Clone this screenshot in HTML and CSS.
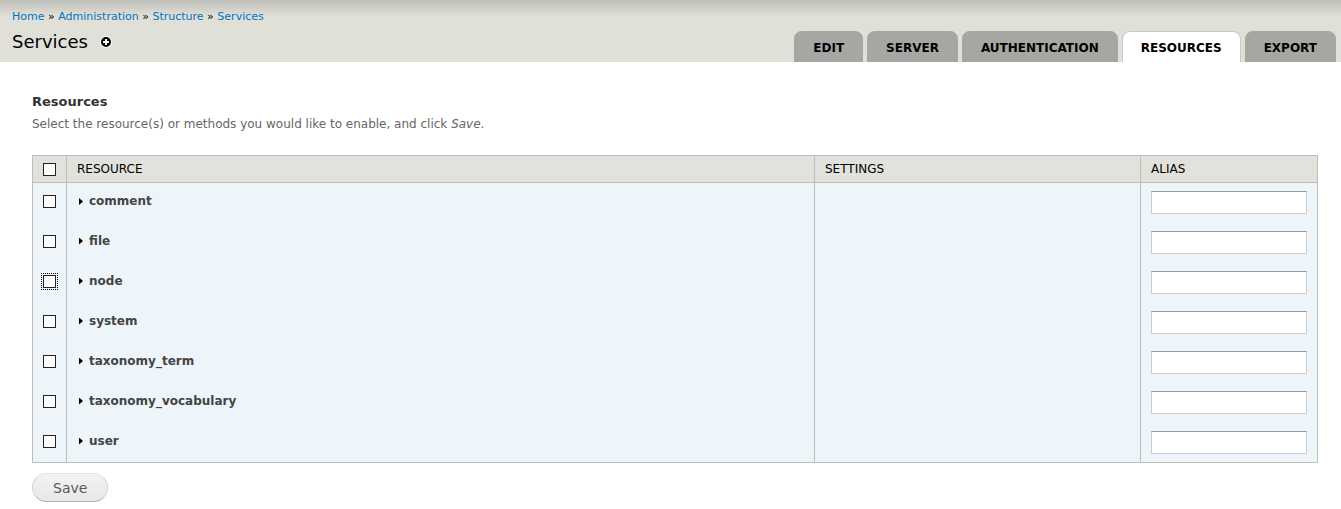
FILE: index.html
```html
<!DOCTYPE html>
<html lang="en">
<head>
<meta charset="utf-8">
<title>Services</title>
<link rel="stylesheet" href="styles.css">
</head>
<body>
<header class="branding">
  <nav class="breadcrumb" aria-label="Breadcrumb"><a href="#">Home</a> » <a href="#">Administration</a> » <a href="#">Structure</a> » <a href="#">Services</a></nav>
  <div class="title-bar">
    <h1 class="page-title">Services</h1>
    <a class="shortcut" href="#" aria-label="Add to shortcuts">
      <svg width="12" height="12" viewBox="0 0 12 12"><circle cx="6" cy="6" r="6" fill="#fff"/><circle cx="6" cy="6" r="5" fill="#000"/><path d="M5 3h2v2h2v2H7v2H5V7H3V5h2z" fill="#fff"/></svg>
    </a>
  </div>
  <nav class="tabs" aria-label="Primary tabs">
    <a class="tab" href="#">EDIT</a>
    <a class="tab" href="#">SERVER</a>
    <a class="tab" href="#">AUTHENTICATION</a>
    <a class="tab tab-active" href="#" aria-current="page">RESOURCES</a>
    <a class="tab" href="#">EXPORT</a>
  </nav>
</header>
<main class="content">
  <form>
    <h2 class="section-title">Resources</h2>
    <p class="description">Select the resource(s) or methods you would like to enable, and click <em>Save</em>.</p>
    <table class="resources">
      <colgroup><col class="col-check"><col><col class="col-settings"><col class="col-alias"></colgroup>
      <thead>
        <tr><th class="check-cell"><input class="check" type="checkbox" aria-label="Select all"></th><th>RESOURCE</th><th>SETTINGS</th><th>ALIAS</th></tr>
      </thead>
      <tbody>
        <tr><td class="check-cell"><input class="check" type="checkbox" id="r1"></td><td><label class="name" for="r1">comment</label></td><td></td><td><input class="alias" type="text" aria-label="comment alias"></td></tr>
        <tr><td class="check-cell"><input class="check" type="checkbox" id="r2"></td><td><label class="name" for="r2">file</label></td><td></td><td><input class="alias" type="text" aria-label="file alias"></td></tr>
        <tr><td class="check-cell"><input class="check check-focused" type="checkbox" id="r3"></td><td><label class="name" for="r3">node</label></td><td></td><td><input class="alias" type="text" aria-label="node alias"></td></tr>
        <tr><td class="check-cell"><input class="check" type="checkbox" id="r4"></td><td><label class="name" for="r4">system</label></td><td></td><td><input class="alias" type="text" aria-label="system alias"></td></tr>
        <tr><td class="check-cell"><input class="check" type="checkbox" id="r5"></td><td><label class="name" for="r5">taxonomy_term</label></td><td></td><td><input class="alias" type="text" aria-label="taxonomy_term alias"></td></tr>
        <tr><td class="check-cell"><input class="check" type="checkbox" id="r6"></td><td><label class="name" for="r6">taxonomy_vocabulary</label></td><td></td><td><input class="alias" type="text" aria-label="taxonomy_vocabulary alias"></td></tr>
        <tr><td class="check-cell"><input class="check" type="checkbox" id="r7"></td><td><label class="name" for="r7">user</label></td><td></td><td><input class="alias" type="text" aria-label="user alias"></td></tr>
      </tbody>
    </table>
    <button class="save" type="button">Save</button>
  </form>
</main>
</body>
</html>
```
FILE: styles.css
```css
* { box-sizing: border-box; }

body {
  margin: 0;
  background: #fff;
  color: #000;
  font: 13px/20px "DejaVu Sans", sans-serif;
}

.branding {
  display: grid;
  grid-template-columns: 1fr auto;
  padding: 8px 5px 0 12px;
  background: #e0dfd8 linear-gradient(#bfbfba, #e0dfd8) no-repeat 0 0 / 100% 16px;
}

.breadcrumb {
  grid-column: 1 / 3;
  font-size: 11px;
  line-height: 18px;
}

.breadcrumb a {
  color: #0074bd;
  text-decoration: none;
}

.title-bar {
  display: flex;
  align-items: center;
  gap: 12px;
  height: 36px;
  padding-bottom: 4px;
}

.page-title {
  margin: 0;
  font-size: 18px;
  font-weight: normal;
  line-height: 24px;
}

.shortcut { display: flex; }

.tabs {
  display: flex;
  align-items: flex-end;
  gap: 4px;
}

.tab {
  height: 31px;
  padding: 0 19px;
  border-radius: 8px 8px 0 0;
  background: #a6a7a2;
  color: #000;
  font-size: 12px;
  font-weight: bold;
  line-height: 34px;
  text-decoration: none;
}

.tab-active {
  padding: 0 18px;
  border: 1px solid #c9cac3;
  border-bottom: 0;
  background: #fff;
  line-height: 32px;
}

.content { padding: 30px 23px 0 32px; }

.section-title {
  margin: 0;
  color: #333;
  font-size: 13px;
  line-height: 20px;
}

.description {
  margin: 2px 0 21px;
  color: #666;
  font-size: 12px;
  line-height: 20px;
}

.resources {
  width: 100%;
  table-layout: fixed;
  border-collapse: collapse;
  border: 1px solid #bebfb9;
}

.col-check { width: 34px; }
.col-settings { width: 326px; }
.col-alias { width: 177px; }

.resources th {
  height: 27px;
  padding: 0 10px;
  border: 1px solid #bebfb9;
  background: #e1e2dc;
  font-size: 12px;
  font-weight: normal;
  line-height: 16px;
  text-align: left;
}

.resources td {
  height: 40px;
  padding: 8px 10px;
  border-right: 1px solid #bebfb9;
  background: #edf5fa;
  vertical-align: top;
}

.resources .check-cell {
  padding-right: 0;
}

.check {
  display: block;
  appearance: none;
  width: 13px;
  height: 13px;
  margin: 0;
  border: 1px solid #222;
  background: #fff;
}

td .check { margin-top: 4px; }

.check-focused {
  outline: 1px dotted #000;
  outline-offset: 1px;
}

.name {
  display: flex;
  align-items: center;
  gap: 6px;
  padding-left: 2px;
  color: #444;
  font-size: 12px;
  font-weight: bold;
  line-height: 20px;
}

.name::before {
  content: "";
  width: 4px;
  height: 7px;
  margin-top: 1px;
  background: #000;
  clip-path: polygon(0 0, 100% 50%, 0 100%);
}

.alias {
  display: block;
  width: 100%;
  height: 23px;
  padding: 2px;
  border: 1px solid #ccc;
  border-top-color: #999;
  background: #fff;
  font: inherit;
}

.save {
  display: block;
  height: 29px;
  margin-top: 10px;
  padding: 0 20px;
  border: 1px solid #e4e4e4;
  border-bottom-color: #b4b4b4;
  border-right-color: #d2d2d2;
  border-left-color: #d2d2d2;
  border-radius: 15px;
  background: linear-gradient(#f3f3f3, #e8e8e8);
  color: #5a5a5a;
  font: 14px/20px "DejaVu Sans", sans-serif;
}
```
